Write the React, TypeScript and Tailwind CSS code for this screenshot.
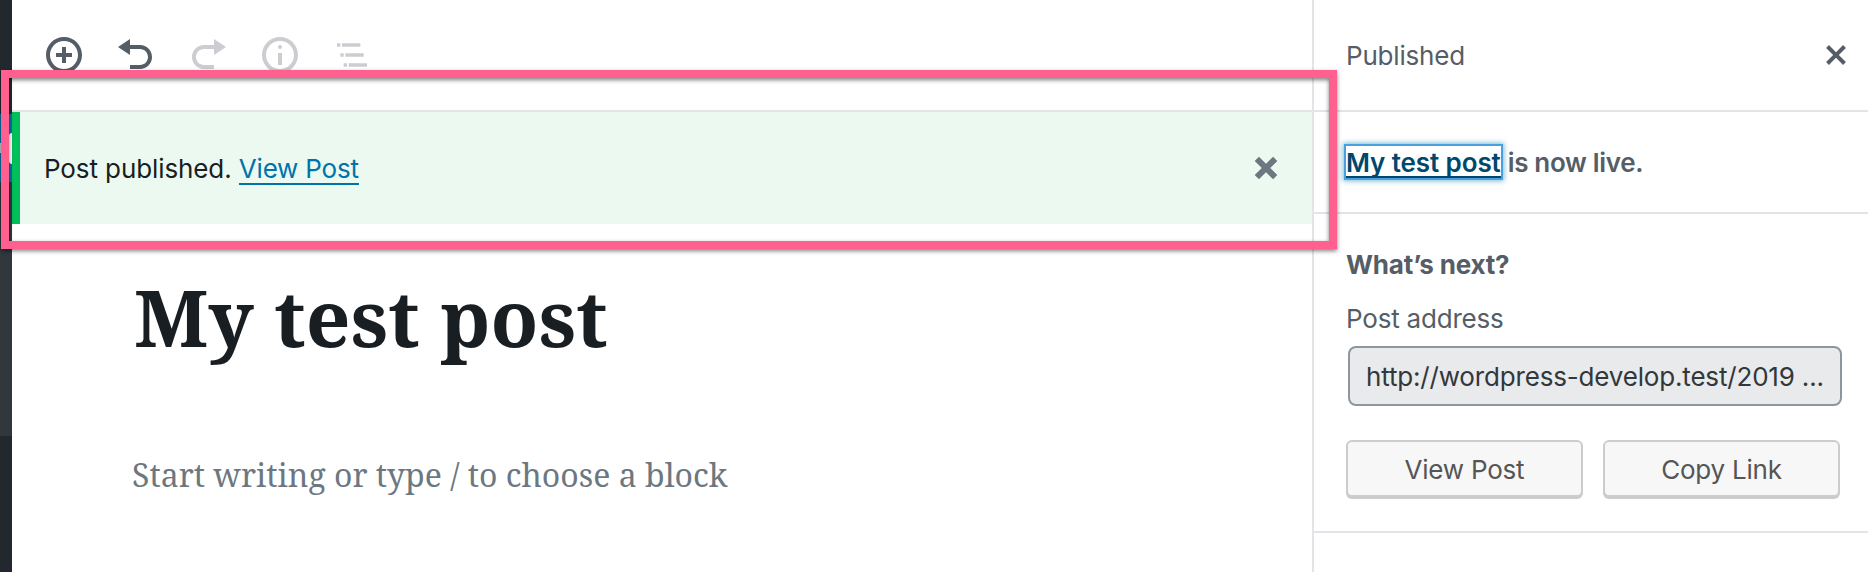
import React from "react";

function Icon({ d, box = 20, className = "" }: { d: string; box?: number; className?: string }) {
  return (
    <svg viewBox={`0 0 ${box} ${box}`} className={`size-10 shrink-0 fill-current ${className}`} aria-hidden="true">
      <path d={d} />
    </svg>
  );
}

const icons = {
  insert:
    "M10 1c-5 0-9 4-9 9s4 9 9 9 9-4 9-9-4-9-9-9zm0 16c-3.9 0-7-3.1-7-7s3.1-7 7-7 7 3.1 7 7-3.1 7-7 7zm1-11H9v3H6v2h3v3h2v-3h3V9h-3V6z",
  undo: "M12 5H7V2L1 6l6 4V7h5c2.2 0 4 1.8 4 4s-1.8 4-4 4H7v2h5c3.3 0 6-2.7 6-6s-2.7-6-6-6z",
  redo: "M8 5h5V2l6 4-6 4V7H8c-2.2 0-4 1.8-4 4s1.8 4 4 4h5v2H8c-3.3 0-6-2.7-6-6s2.7-6 6-6z",
  info: "M10 1c-5 0-9 4-9 9s4 9 9 9 9-4 9-9-4-9-9-9zm0 16c-3.9 0-7-3.1-7-7s3.1-7 7-7 7 3.1 7 7-3.1 7-7 7zM9 9h2v6H9V9zM10 5a1 1 0 1 0 0 2a1 1 0 1 0 0-2z",
  outline:
    "M5 5H3v2h2V5zm3 8h11v-2H8v2zm9-8H6v2h11V5zM7 11H5v2h2v-2zm0 8h2v-2H7v2zm3-2v2h11v-2H10z",
  close:
    "M14.95 6.46L11.41 10l3.54 3.54-1.41 1.41L10 11.42l-3.53 3.53-1.42-1.42L8.58 10 5.05 6.47l1.42-1.42L10 8.58l3.54-3.53z",
  dismiss:
    "M12.12 10l3.53 3.53-2.12 2.12L10 12.12l-3.54 3.54-2.12-2.12L7.88 10 4.34 6.46l2.12-2.12L10 7.88l3.54-3.53 2.12 2.12z",
};

function AdminMenu() {
  return (
    <aside className="flex w-3 shrink-0 flex-col overflow-hidden bg-[#23282f]">
      <div className="h-[114px]" />
      <div className="flex h-[68px] items-center justify-between bg-[#0073aa]">
        <span className="h-[10px] w-[3px] bg-[#c9d3da]" />
        <span className="h-[31px] w-[3px] rounded-l-full bg-white" />
      </div>
      <div className="h-[254px] bg-[#32373e]" />
    </aside>
  );
}

function Toolbar() {
  return (
    <header className="flex h-28 shrink-0 gap-8 border-b-2 border-[#e2e4e7] pt-[35px] pl-8 text-[#555d66]">
      <Icon d={icons.insert} />
      <Icon d={icons.undo} />
      <Icon d={icons.redo} className="text-[#cccdd1]" />
      <Icon d={icons.info} className="text-[#cccdd1]" />
      <Icon d={icons.outline} box={24} className="text-[#cccdd1]" />
    </header>
  );
}

function Notice() {
  return (
    <div className="flex h-28 shrink-0 items-center justify-between border-l-8 border-[#00c05c] bg-[#ecf9f0] pr-[26px] pl-6 text-[26px] text-[#191e23]">
      <p className="whitespace-nowrap tracking-[-0.1px]">
        Post published.{" "}
        <a className="inline-block border-b-2 border-[#0073aa] leading-[28px] tracking-[-0.2px] text-[#0073aa]">
          View Post
        </a>
      </p>
      <Icon d={icons.dismiss} className="text-[#6c7781]" />
    </div>
  );
}

function Editor() {
  return (
    <main className="flex w-[1300px] shrink-0 flex-col">
      <Toolbar />
      <Notice />
      <div className="flex flex-col pl-[120px] font-['Noto_Serif','DejaVu_Serif_Condensed','DejaVu_Serif',serif]">
        <h1 className="mt-[39px] ml-[2px] text-[78.2px] leading-[108px] font-bold whitespace-nowrap text-[#191e23]">
          My test post
        </h1>
        <p className="mt-[77px] text-[32px] leading-[54px] whitespace-nowrap text-[#6c7781]">
          Start writing or type / to choose a block
        </p>
      </div>
    </main>
  );
}

function PanelButton({ children }: { children: React.ReactNode }) {
  return (
    <button className="h-[57px] flex-1 rounded-[6px] border-2 border-[#ccc] bg-[#f7f7f7] pt-[3px] text-[26px] tracking-[-0.22px] text-[#555] shadow-[0_2px_0_#ccc]">
      {children}
    </button>
  );
}

function PublishPanel() {
  return (
    <section className="flex flex-1 flex-col border-l-2 border-[#e2e4e7] text-[26px] leading-[36px] tracking-[-0.2px] text-[#555d66]">
      <div className="flex h-28 items-center justify-between border-b-2 border-[#e2e4e7] pr-3 pl-8">
        <span className="pt-0.5">Published</span>
        <Icon d={icons.close} />
      </div>
      <div className="flex h-[102px] items-center border-b-2 border-[#e2e4e7] pl-8 font-semibold">
        <a className="border-b-2 border-[#00486b] pt-1 leading-[26px] tracking-[-0.1px] text-[#00486b] shadow-[0_0_0_2px_#4a9fdf,0_0_5px_3px_rgba(30,140,190,0.6)]">
          My test post
        </a>
        <span className="mt-0.5 ml-[7px] tracking-[-0.32px]">is now live.</span>
      </div>
      <div className="flex h-[319px] flex-col border-b-2 border-[#e2e4e7] pt-[33px] pl-8">
        <h2 className="font-bold">What’s next?</h2>
        <label className="mt-[18px]">Post address</label>
        <div className="mt-[9px] ml-[2px] flex h-[60px] w-[494px] items-center rounded-[8px] border-2 border-[#8d96a0] bg-[#e8eaeb] pt-0.5 pl-4 tracking-[-0.17px] whitespace-nowrap text-[#32373c]">
          http://wordpress-develop.test/2019 ...
        </div>
        <div className="mt-[34px] flex w-[494px] gap-5">
          <PanelButton>View Post</PanelButton>
          <PanelButton>Copy Link</PanelButton>
        </div>
      </div>
    </section>
  );
}

export default function App() {
  return (
    <div className="relative flex h-[572px] w-[1868px] overflow-hidden bg-white font-['Inter',sans-serif]">
      <AdminMenu />
      <Editor />
      <PublishPanel />
      <div className="pointer-events-none absolute top-[70px] left-px h-[179px] w-[1336px] border-8 border-[#ff6090] drop-shadow-[0_2px_2px_rgba(0,0,0,0.5)]" />
    </div>
  );
}
